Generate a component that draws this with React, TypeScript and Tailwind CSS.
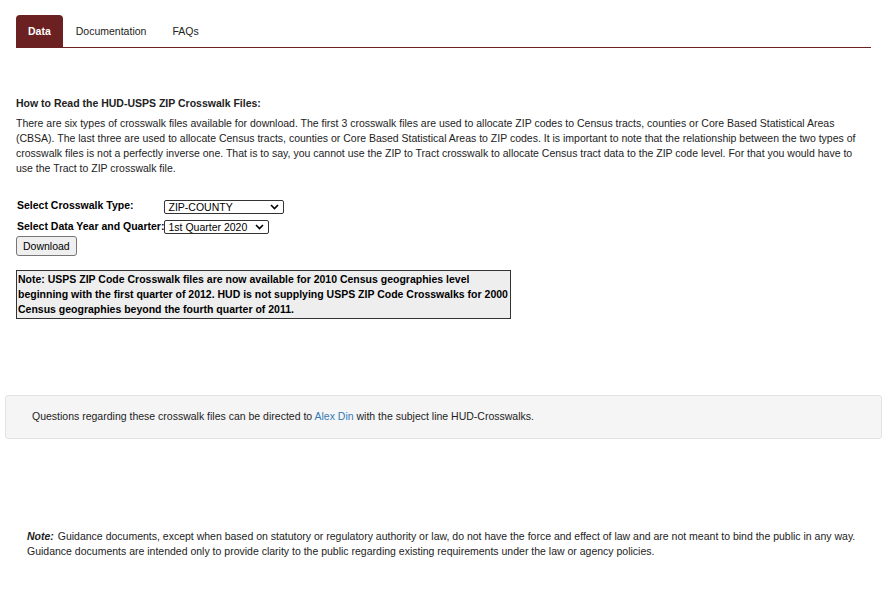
import React, { useState } from "react";

const tabs = ["Data", "Documentation", "FAQs"];

const Select: React.FC<{ value: string; width: string }> = ({ value, width }) => (
  <div
    className={`flex items-center justify-between h-[14px] border border-[#333] rounded-[2px] bg-white pl-[3px] pr-[4px] text-[10.5px] leading-none text-black ${width}`}
  >
    <span>{value}</span>
    <svg width="9" height="6" viewBox="0 0 9 6">
      <path d="M1 1l3.5 3.5L8 1" fill="none" stroke="#000" strokeWidth="1.6" />
    </svg>
  </div>
);

const App: React.FC = () => {
  const [active, setActive] = useState("Data");
  return (
    <div
      className="w-[896px] min-h-[596px] bg-white text-[#333]"
      style={{ fontFamily: '"Liberation Sans", Arial, sans-serif' }}
    >
      <div className="pt-[15px] px-[16px] pr-[25px]">
        <div className="flex border-b border-[#6b2121] h-[33px] text-[10.5px]">
          {tabs.map((t) => (
            <button
              key={t}
              onClick={() => setActive(t)}
              className={
                active === t
                  ? "h-[32px] pt-[2px] px-[12px] bg-[#6b2121] text-white font-bold rounded-t-[4px]"
                  : "h-[32px] pt-[2px] px-[13px] text-[#222]"
              }
            >
              {t}
            </button>
          ))}
        </div>

        <div className="mt-[48px] text-[10.5px] leading-[15px] text-[#222]">
          <p className="font-bold">How to Read the HUD-USPS ZIP Crosswalk Files:</p>
          <p className="mt-[5px] pr-[8px]">
            There are six types of crosswalk files available for download. The first 3 crosswalk
            files are used to allocate ZIP codes to Census tracts, counties or Core Based
            Statistical Areas (CBSA). The last three are used to allocate Census tracts, counties
            or Core Based Statistical Areas to ZIP codes. It is important to note that the
            relationship between the two types of crosswalk files is not a perfectly inverse one.
            That is to say, you cannot use the ZIP to Tract crosswalk to allocate Census tract data
            to the ZIP code level. For that you would have to use the Tract to ZIP crosswalk file.
          </p>

          <div className="mt-[22px] grid grid-cols-[auto_auto] justify-start gap-y-[5px] text-black">
            <span className="pl-[1px] font-bold whitespace-nowrap">Select Crosswalk Type:</span>
            <div className="pt-[2px]">
              <Select value="ZIP-COUNTY" width="w-[120px]" />
            </div>
            <span className="pl-[1px] font-bold whitespace-nowrap">Select Data Year and Quarter:</span>
            <div className="pt-[1px]">
              <Select value="1st Quarter 2020" width="w-[105px]" />
            </div>
          </div>
          <button className="mt-[2px] h-[20px] px-[6px] border border-[#767676] rounded-[3px] bg-[#efefef] text-[10.5px] text-black">
            Download
          </button>

          <div className="mt-[14px] w-[495px] border border-[#333] bg-[#eeeeee] px-[1px] py-[1px] font-bold text-black">
            Note: USPS ZIP Code Crosswalk files are now available for 2010 Census geographies level
            beginning with the first quarter of 2012. HUD is not supplying USPS ZIP Code Crosswalks
            for 2000 Census geographies beyond the fourth quarter of 2011.
          </div>
        </div>
      </div>

      <div className="mx-[5px] mr-[14px] mt-[76px] h-[44px] flex items-center px-[26px] bg-[#f5f5f5] border border-[#e3e3e3] rounded-[3px] text-[10.5px] text-[#222]">
        <p>
          Questions regarding these crosswalk files can be directed to{" "}
          <a href="#" className="text-[#337ab7]">
            Alex Din
          </a>{" "}
          with the subject line HUD-Crosswalks.
        </p>
      </div>

      <div className="mt-[90px] px-[27px] text-[10.5px] leading-[15px] text-[#222]">
        <p>
          <em className="font-bold pr-[1px]">Note:</em> Guidance documents, except when based on
          statutory or regulatory authority or law, do not have the force and effect of law and are
          not meant to bind the public in any way. Guidance documents are intended only to provide
          clarity to the public regarding existing requirements under the law or agency policies.
        </p>
      </div>
    </div>
  );
};

export default App;
